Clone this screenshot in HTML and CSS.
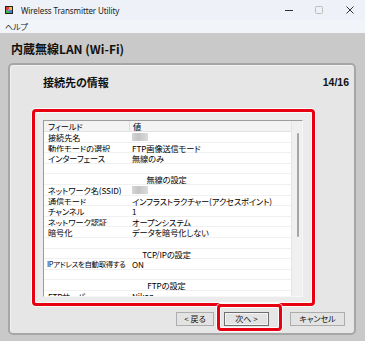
FILE: index.html
```html
<!DOCTYPE html>
<html lang="ja">
<head>
<meta charset="utf-8">
<title>Wireless Transmitter Utility</title>
<link rel="stylesheet" href="styles.css">
</head>
<body>
<div class="window">
  <div class="titlebar">
    <svg class="app-icon" width="8" height="8" viewBox="0 0 8 8">
      <rect width="8" height="8" fill="#222"/>
      <rect x="1" y="1" width="3" height="3" fill="#e23b3b"/>
      <rect x="4" y="1" width="3" height="3" fill="#f2c230"/>
      <rect x="1" y="4" width="3" height="3" fill="#3bb54a"/>
      <rect x="4" y="4" width="3" height="3" fill="#3a7ee0"/>
      <rect x="3" y="3" width="2" height="2" fill="#c86ad8"/>
    </svg>
    <span class="title">Wireless Transmitter Utility</span>
    <div class="controls">
      <svg class="ctl" width="10" height="10" viewBox="0 0 10 10"><path d="M1 5.5H9" stroke="#333" stroke-width="1"/></svg>
      <svg class="ctl" width="10" height="10" viewBox="0 0 10 10"><rect x="1.5" y="1.5" width="7" height="7" rx="1" fill="none" stroke="#bdbdbd" stroke-width="1"/></svg>
      <svg class="ctl" width="10" height="10" viewBox="0 0 10 10"><path d="M1.5 1.5L8.5 8.5M8.5 1.5L1.5 8.5" stroke="#333" stroke-width="1"/></svg>
    </div>
  </div>
  <div class="menubar"><span class="menu-item">ヘルプ</span></div>
  <div class="client">
    <h1 class="heading">内蔵無線LAN (Wi-Fi)</h1>
    <div class="panel">
      <div class="panel-head">
        <span class="step-title">接続先の情報</span>
        <span class="step-count">14/16</span>
      </div>
      <div class="highlight">
        <div class="list">
          <div class="rows">
            <div class="row head"><span class="c1">フィールド</span><span class="c2">値</span></div>
            <div class="row"><span class="c1">接続先名</span><span class="c2"><span class="masked"></span></span></div>
            <div class="row"><span class="c1">動作モードの選択</span><span class="c2">FTP画像送信モード</span></div>
            <div class="row"><span class="c1">インターフェース</span><span class="c2">無線のみ</span></div>
            <div class="row"><span class="c1"></span><span class="c2"></span></div>
            <div class="row section">無線の設定</div>
            <div class="row"><span class="c1">ネットワーク名(SSID)</span><span class="c2"><span class="masked"></span></span></div>
            <div class="row"><span class="c1">通信モード</span><span class="c2">インフラストラクチャー(アクセスポイント)</span></div>
            <div class="row"><span class="c1">チャンネル</span><span class="c2">1</span></div>
            <div class="row"><span class="c1">ネットワーク認証</span><span class="c2">オープンシステム</span></div>
            <div class="row"><span class="c1">暗号化</span><span class="c2">データを暗号化しない</span></div>
            <div class="row"><span class="c1"></span><span class="c2"></span></div>
            <div class="row section">TCP/IPの設定</div>
            <div class="row"><span class="c1 tight">IPアドレスを自動取得する</span><span class="c2">ON</span></div>
            <div class="row"><span class="c1"></span><span class="c2"></span></div>
            <div class="row section">FTPの設定</div>
            <div class="row"><span class="c1">FTPサーバー</span><span class="c2">Nikon</span></div>
          </div>
          <div class="scrollbar"><div class="thumb"></div></div>
        </div>
      </div>
      <div class="buttons">
        <button class="btn prev">&lt; 戻る</button>
        <button class="btn next">次へ &gt;<span class="ring"></span></button>
        <button class="btn cancel">キャンセル</button>
      </div>
    </div>
  </div>
</div>
</body>
</html>
```

FILE: styles.css
```css
* { box-sizing: border-box; }
html, body { margin: 0; padding: 0; }
body {
  width: 365px;
  height: 341px;
  overflow: hidden;
  background: #c9c9c9;
  font-family: "Noto Sans CJK JP", "Noto Sans", sans-serif;
  font-feature-settings: "palt" 1;
  color: #000;
}
.window { width: 365px; height: 341px; display: flex; flex-direction: column; }

.titlebar {
  height: 20px;
  background: #eef2f8;
  display: flex;
  align-items: center;
  padding-left: 5px;
}
.app-icon { display: block; margin-right: 8px; }
.title {
  font-family: "Noto Sans", sans-serif;
  font-size: 8px;
  color: #1a1a1a;
  letter-spacing: -0.1px;
}
.controls {
  margin-left: auto;
  display: flex;
  align-items: center;
}
.ctl { display: block; margin-left: 20px; }
.ctl:first-child { margin-left: 0; }
.ctl:last-child { margin-right: 10px; margin-left: 21px; }

.menubar {
  height: 13px;
  background: #f1f4f8;
  display: flex;
  align-items: center;
  padding-left: 5px;
}
.menu-item { font-size: 8px; color: #222; line-height: 10px; }

.client { flex: 1; background: #c9c9c9; }
.heading {
  margin: 0;
  height: 30px;
  padding: 2px 0 0 11px;
  font-size: 12px;
  font-weight: bold;
  line-height: 28px;
  color: #111;
}

.panel {
  margin-left: 8px;
  width: 348px;
  height: 272px;
  border: 2px solid #a6a6a6;
  border-radius: 5px;
  background: #e6e6e6;
  box-shadow: inset 1px 1px 0 #f2f2f2;
}
.panel-head {
  height: 44px;
  display: flex;
  justify-content: space-between;
  align-items: flex-start;
  padding: 10px 5px 0 33px;
}
.step-title { font-size: 11px; font-weight: bold; line-height: 14px; color: #111; }
.step-count {
  font-family: "Liberation Sans", sans-serif;
  font-size: 10.5px;
  font-weight: bold;
  line-height: 14px;
  color: #111;
}

.highlight {
  margin-left: 22px;
  width: 283px;
  height: 197px;
  border: 3px solid #e60012;
  border-radius: 4px;
  background: #ebebeb;
  padding: 8px 9px 6px 8px;
  box-shadow: 0 0 0 1px #fafafa, inset 0 0 0 1px #fafafa;
}
.list {
  height: 177px;
  display: flex;
  background: #fff;
  border-top: 1px solid #9d9d9d;
  border-left: 1px solid #9d9d9d;
  border-right: 1px solid #f7f7f7;
  border-bottom: 1px solid #f7f7f7;
  overflow: hidden;
}
.rows { flex: 1; overflow: hidden; }
.row {
  display: flex;
  height: 10.6px;
  line-height: 10px;
  font-size: 8.2px;
  letter-spacing: -0.1px;
  border-bottom: 1px solid #f0f0f0;
  white-space: nowrap;
}
.row.head {
  height: 11px;
  background: #f3f3f3;
  border-bottom: 1px solid #e2e2e2;
}
.c1 { width: 86px; padding-left: 4px; overflow: hidden; flex-shrink: 0; }
.c1.tight { font-size: 7.4px; letter-spacing: -0.3px; padding-left: 3px; overflow: visible; }
.row.head .c1 { border-right: 1px solid #dcdcdc; }
.c2 { padding-left: 2px; }
.row.head .c2 { padding-left: 3px; }
.row.section { justify-content: center; padding-right: 2px; }
.masked {
  display: inline-block;
  width: 16px;
  height: 8px;
  margin-top: 1px;
  background: linear-gradient(90deg, #d6d6d6, #c4c4c4 40%, #d0d0d0 70%, #dcdcdc);
  filter: blur(0.6px);
  vertical-align: top;
}
.scrollbar {
  width: 11px;
  background: #f0f0f0;
  border-left: 1px solid #e6e6e6;
  padding-top: 12px;
  padding-left: 5px;
}
.thumb { width: 2px; height: 104px; background: #a6a6a6; border-radius: 1px; }

.buttons {
  display: flex;
  margin-top: 6px;
  padding-left: 166px;
}
.btn {
  height: 14px;
  padding: 0;
  margin: 0;
  border: 1px solid #adadad;
  background: #e3e3e3;
  font-family: "Noto Sans CJK JP", sans-serif;
  font-feature-settings: "palt" 1;
  font-size: 8px;
  line-height: 12px;
  color: #111;
}
.prev { width: 38px; }
.next {
  width: 45px;
  margin-left: 10px;
  position: relative;
  border-color: #6f6f6f;
  box-shadow: inset 0 0 0 1px #f4f4f4;
}
.cancel { width: 55px; margin-left: 21px; }
.ring {
  position: absolute;
  left: -8px;
  top: -9px;
  right: -14px;
  bottom: -6px;
  border: 3px solid #e60012;
  border-radius: 4px;
  box-shadow: 0 0 0 1px #fafafa, inset 0 0 0 1px #fafafa;
  pointer-events: none;
}
```
